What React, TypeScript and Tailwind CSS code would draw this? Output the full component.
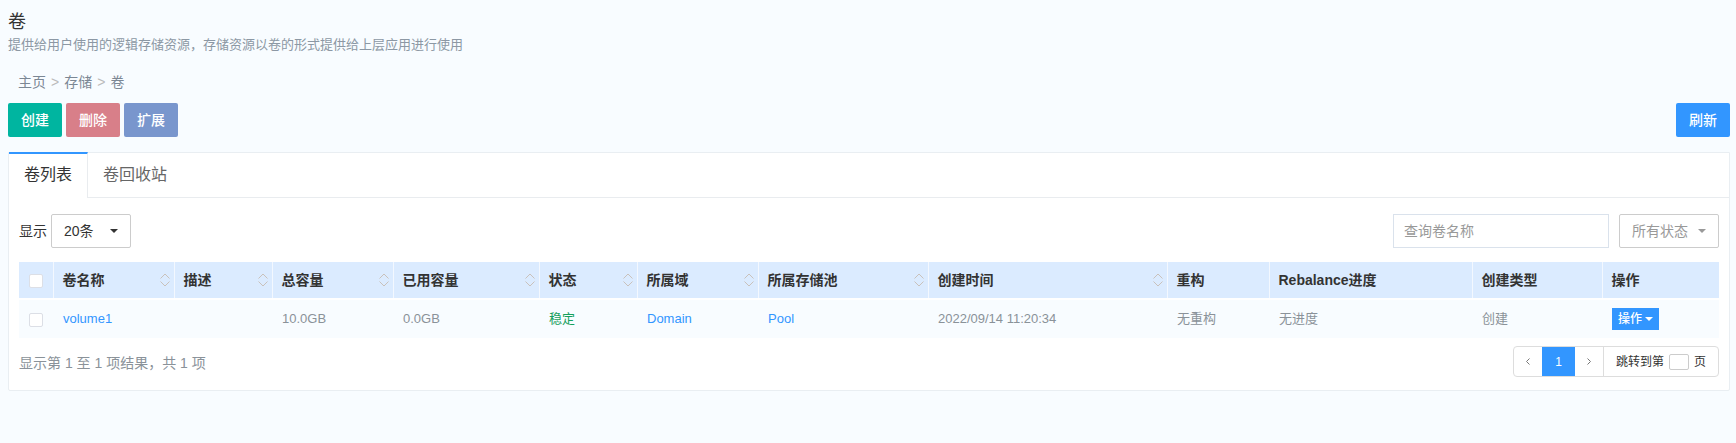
import type { ReactNode } from 'react';
import clsx from 'clsx';

type Column = { title: string; width: string; sortable?: boolean };

const columns: Column[] = [
  { title: '卷名称', width: 'w-[121px]', sortable: true },
  { title: '描述', width: 'w-[98px]', sortable: true },
  { title: '总容量', width: 'w-[121px]', sortable: true },
  { title: '已用容量', width: 'w-[146px]', sortable: true },
  { title: '状态', width: 'w-[98px]', sortable: true },
  { title: '所属域', width: 'w-[121px]', sortable: true },
  { title: '所属存储池', width: 'w-[170px]', sortable: true },
  { title: '创建时间', width: 'w-[239px]', sortable: true },
  { title: '重构', width: 'w-[102px]' },
  { title: 'Rebalance进度', width: 'w-[203px]' },
  { title: '创建类型', width: 'w-[130px]' },
  { title: '操作', width: 'w-[117px]' },
];

function Caret({ className }: { className?: string }) {
  return (
    <svg viewBox="0 0 8 4" className={clsx('h-1 w-2 fill-current', className)} aria-hidden="true">
      <path d="M0 0h8L4 4z" />
    </svg>
  );
}

function SortIcon() {
  return (
    <svg
      viewBox="0 0 10 14"
      className="h-3.5 w-2.5 shrink-0 fill-none stroke-[#c9c1bb]"
      strokeWidth="1"
      aria-hidden="true"
    >
      <path d="M.5 5.500 5 1l4.500 4.500M.5 8.500 5 13l4.500-4.500" />
    </svg>
  );
}

function ToolButton({ color, children }: { color: string; children: ReactNode }) {
  return (
    <button
      type="button"
      className={clsx('h-[34px] rounded-xs px-[13px] text-sm font-medium text-white', color)}
    >
      {children}
    </button>
  );
}

function CheckBox({ label }: { label: string }) {
  return (
    <input
      type="checkbox"
      aria-label={label}
      className="block size-3.5 appearance-none rounded-xs border border-[#dcdfe6] bg-white checked:bg-[#3296ff]"
    />
  );
}

function Link({ children }: { children: ReactNode }) {
  return (
    <a href="#" className="text-[#3296ff]">
      {children}
    </a>
  );
}

export default function App() {
  return (
    <main className="min-h-screen bg-[#f8fcff] px-2 pr-1.5 pt-2 pb-[51px] font-['Liberation_Sans','Noto_Sans_CJK_SC',sans-serif] text-sm text-[#333]">
      <header className="pt-0.5">
        <h1 className="text-lg leading-6">卷</h1>
        <p className="text-[13px] leading-[22px] text-[#8c98a4]">
          提供给用户使用的逻辑存储资源，存储资源以卷的形式提供给上层应用进行使用
        </p>
      </header>

      <nav aria-label="面包屑" className="mt-4 pl-2.5 leading-5 text-[#7b8794]">
        <ol className="flex gap-[5px]">
          <li>
            <a href="#">主页</a>
          </li>
          <li aria-hidden="true" className="text-[#bbb]">
            &gt;
          </li>
          <li>
            <a href="#">存储</a>
          </li>
          <li aria-hidden="true" className="text-[#bbb]">
            &gt;
          </li>
          <li>卷</li>
        </ol>
      </nav>

      <div className="mt-[11px] flex gap-1">
        <ToolButton color="bg-[#00b5a0]">创建</ToolButton>
        <ToolButton color="bg-[#d87f89]">删除</ToolButton>
        <ToolButton color="bg-[#7996cd]">扩展</ToolButton>
        <div className="ml-auto flex">
          <ToolButton color="bg-[#3296ff]">刷新</ToolButton>
        </div>
      </div>

      <section className="mt-[15px] rounded-b-xs border border-[#e9eef2] bg-white">
        <div role="tablist" className="flex h-[45px] text-base">
          <button
            type="button"
            role="tab"
            aria-selected="true"
            className="-mt-px border-t-2 border-r border-t-[#3296ff] border-r-[#e9ecef] px-[15px] pb-0.5"
          >
            卷列表
          </button>
          <button
            type="button"
            role="tab"
            aria-selected="false"
            className="border-b border-[#e9ecef] px-[15px] text-[#666]"
          >
            卷回收站
          </button>
          <div className="flex-1 border-b border-[#e9ecef]" />
        </div>

        <div className="px-2.5 pt-4 pb-[13px]">
          <div className="flex items-center">
            <label htmlFor="page-size" className="mr-1">
              显示
            </label>
            <div className="relative">
              <select
                id="page-size"
                className="block h-[34px] w-20 appearance-none rounded-xs border border-[#ccc] bg-white px-3"
              >
                <option>20条</option>
                <option>50条</option>
              </select>
              <Caret className="pointer-events-none absolute top-[15px] right-[13px]" />
            </div>
            <input
              type="text"
              aria-label="查询卷名称"
              placeholder="查询卷名称"
              className="ml-auto h-[34px] w-[216px] border border-[#dae2ec] px-2.5 placeholder:text-[#999]"
            />
            <div className="relative ml-2.5 text-[#999]">
              <select
                aria-label="所有状态"
                className="block h-[34px] w-[100px] appearance-none rounded-xs border border-[#ccc] bg-white px-3"
              >
                <option>所有状态</option>
                <option>稳定</option>
              </select>
              <Caret className="pointer-events-none absolute top-[15px] right-[13px]" />
            </div>
          </div>

          <table className="mt-3.5 w-full table-fixed text-left">
            <thead>
              <tr className="h-[37px] bg-[#dbebff]">
                <th scope="col" className="w-[34px] border-r border-[#f3f8ff] pt-0.5 pl-2.5">
                  <CheckBox label="全选" />
                </th>
                {columns.map((column) => (
                  <th
                    key={column.title}
                    scope="col"
                    className={clsx(
                      'border-r border-[#f3f8ff] pr-1 pl-[9px] font-bold last:border-r-0',
                      column.width,
                    )}
                  >
                    <div className="flex items-center justify-between whitespace-nowrap">
                      {column.title}
                      {column.sortable && <SortIcon />}
                    </div>
                  </th>
                ))}
              </tr>
            </thead>
            <tbody className="text-[13px] text-[#8a9299]">
              <tr className="h-[39px] border-t-2 border-white bg-[#f8fcff] *:pl-2.5">
                <td>
                  <div className="pt-0.5">
                    <CheckBox label="选择 volume1" />
                  </div>
                </td>
                <td>
                  <Link>volume1</Link>
                </td>
                <td />
                <td>10.0GB</td>
                <td>0.0GB</td>
                <td className="text-[#16a05d]">稳定</td>
                <td>
                  <Link>Domain</Link>
                </td>
                <td>
                  <Link>Pool</Link>
                </td>
                <td>2022/09/14 11:20:34</td>
                <td>无重构</td>
                <td>无进度</td>
                <td>创建</td>
                <td>
                  <button
                    type="button"
                    className="flex h-[22px] items-center gap-[3px] bg-[#3296ff] px-1.5 text-xs font-medium text-white"
                  >
                    操作
                    <Caret />
                  </button>
                </td>
              </tr>
            </tbody>
          </table>

          <div className="mt-2 flex items-center justify-between">
            <p className="pt-0.5 text-[#8a9299]">显示第 1 至 1 项结果，共 1 项</p>
            <nav
              aria-label="分页"
              className="flex h-[31px] overflow-hidden rounded-sm border border-[#ddd] text-xs"
            >
              <button type="button" aria-label="上一页" className="flex w-7 items-center justify-center text-[#777]">
                <svg viewBox="0 0 4 7" className="h-[7px] w-1 fill-none stroke-current" aria-hidden="true">
                  <path d="M3.500.5.5 3.500l3 3" />
                </svg>
              </button>
              <button type="button" aria-current="page" className="-my-px w-[33px] bg-[#3296ff] font-medium text-white">
                1
              </button>
              <button type="button" aria-label="下一页" className="flex w-7 items-center justify-center text-[#777]">
                <svg viewBox="0 0 4 7" className="h-[7px] w-1 fill-none stroke-current" aria-hidden="true">
                  <path d="m.5.5 3 3-3 3" />
                </svg>
              </button>
              <label className="flex items-center gap-[5px] border-l border-[#ddd] px-3">
                跳转到第
                <input type="text" className="h-4 w-5 rounded-xs border border-[#ccc]" />
                页
              </label>
            </nav>
          </div>
        </div>
      </section>
    </main>
  );
}
